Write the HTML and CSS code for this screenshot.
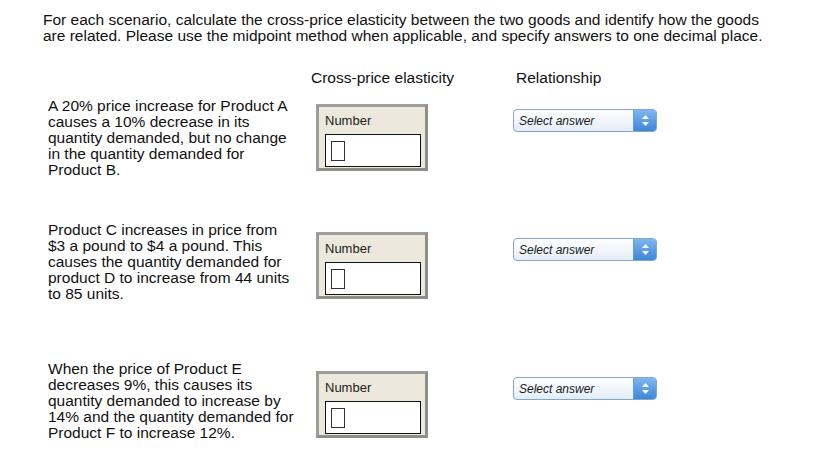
FILE: index.html
```html
<!DOCTYPE html>
<html lang="en">

<head>
  <meta charset="UTF-8">
  <meta name="viewport" content="width=device-width, initial-scale=1.0">
  <title>Cross-price elasticity</title>
  <link rel="stylesheet" href="styles.css">
</head>

<body>

  <p class="intro">
    For each scenario, calculate the cross-price elasticity between the two goods and identify how the goods
    are related. Please use the midpoint method when applicable, and specify answers to one decimal place.
  </p>

  <div class="question-table">
    <div class="table-head">
      <span class="head-elasticity">Cross-price elasticity</span>
      <span class="head-relation">Relationship</span>
    </div>

    <div class="row row-first">
      <div class="scenario">
        A 20% price increase for Product A causes a 10% decrease in its quantity demanded, but no change in the quantity demanded for Product B.
      </div>
      <div class="number-box">
        <div class="number-label">Number</div>
        <div class="number-input"><span class="caret"></span></div>
      </div>
      <div class="select-box">
        <span>Select answer</span>
        <span class="select-arrows">
          <svg width="7" height="11" viewBox="0 0 7 11"><path fill="#fff" d="M3.5 0L7 4H0z M0 7h7l-3.5 4z" /></svg>
        </span>
      </div>
    </div>

    <div class="row row-tall">
      <div class="scenario">
        Product C increases in price from $3 a pound to $4 a pound. This causes the quantity demanded for product D to increase from 44 units to 85 units.
      </div>
      <div class="number-box">
        <div class="number-label">Number</div>
        <div class="number-input"><span class="caret"></span></div>
      </div>
      <div class="select-box">
        <span>Select answer</span>
        <span class="select-arrows">
          <svg width="7" height="11" viewBox="0 0 7 11"><path fill="#fff" d="M3.5 0L7 4H0z M0 7h7l-3.5 4z" /></svg>
        </span>
      </div>
    </div>

    <div class="row">
      <div class="scenario">
        When the price of Product E decreases 9%, this causes its quantity demanded to increase by 14% and the quantity demanded for Product F to increase 12%.
      </div>
      <div class="number-box">
        <div class="number-label">Number</div>
        <div class="number-input"><span class="caret"></span></div>
      </div>
      <div class="select-box">
        <span>Select answer</span>
        <span class="select-arrows">
          <svg width="7" height="11" viewBox="0 0 7 11"><path fill="#fff" d="M3.5 0L7 4H0z M0 7h7l-3.5 4z" /></svg>
        </span>
      </div>
    </div>
  </div>

</body>

</html>
```

FILE: styles.css
```css
* {
  box-sizing: border-box;
  margin: 0;
  padding: 0;
}

body {
  font-family: 'Liberation Sans', Arial, sans-serif;
  font-size: 15.5px;
  color: #111;
  background-color: #fff;
}

.intro {
  width: 722px;
  margin: 12px 0 0 43px;
  line-height: 16px;
}

.question-table {
  margin: 26px 0 0 48px;
}

.table-head {
  display: flex;
  line-height: 16px;
  margin-bottom: 12px;
}

.head-elasticity {
  width: 468px;
  padding-left: 263px;
}

.row {
  display: flex;
  align-items: flex-start;
}

.row-first {
  height: 124px;
}

.row-tall {
  height: 139px;
}

.scenario {
  width: 268px;
  padding-right: 21px;
  line-height: 16px;
}

/* Number field */
.number-box {
  width: 112px;
  height: 67px;
  margin-top: 10px;
  padding: 0 4px 1px 6px;
  background-color: #ece9dc;
  border: 3px solid #8e8e8a;
  border-top-color: #9c9c98;
  border-left-color: #9c9c98;
}

.row-first .number-box {
  margin-top: 6px;
}

.number-label {
  font-size: 13px;
  line-height: 15px;
  padding-top: 6px;
  margin-bottom: 6px;
  color: #222;
}

.number-input {
  width: 96px;
  height: 33px;
  background-color: #fff;
  border: 1px solid #111;
  padding: 6px 0 0 5px;
}

.caret {
  display: block;
  width: 14px;
  height: 20px;
  border: 1px solid #333;
}

/* Dropdown */
.select-box {
  display: flex;
  align-items: center;
  justify-content: space-between;
  width: 144px;
  height: 23px;
  margin: 16px 0 0 85px;
  padding-left: 5px;
  border: 1px solid #86a6c8;
  border-radius: 4px;
  background: linear-gradient(#ffffff, #e3edf8);
  font-size: 12px;
  font-style: italic;
  color: #1a1a1a;
  overflow: hidden;
}

.row-first .select-box {
  margin-top: 11px;
}

.select-arrows {
  display: flex;
  align-items: center;
  justify-content: center;
  width: 23px;
  height: 100%;
  background: linear-gradient(#7fb6ef, #3d86d8);
  border-left: 1px solid #6a9bd0;
}
```
